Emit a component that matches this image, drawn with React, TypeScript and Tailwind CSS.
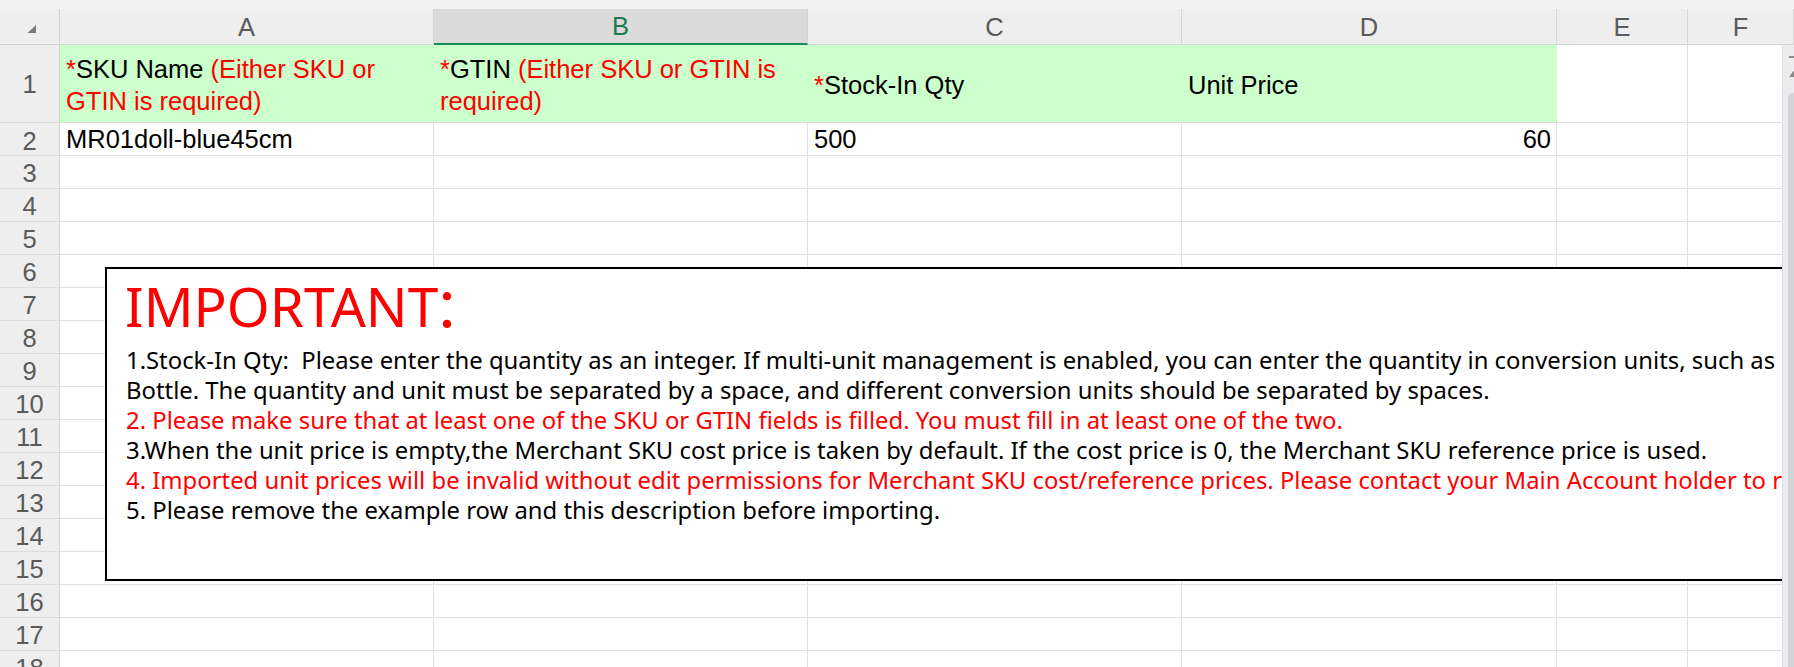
import React from 'react';

const colWidths = ['w-[374px]', 'w-[374px]', 'w-[374px]', 'w-[375px]', 'w-[131px]', 'flex-1'];
const letters = ['A', 'B', 'C', 'D', 'E', 'F'];

const Red = ({ children }: { children: React.ReactNode }) => <span className="text-[#ff0000]">{children}</span>;

function RowHead({ n, tall }: { n: number; tall?: boolean }) {
  return (
    <div
      className={`w-[60px] shrink-0 flex items-center justify-center bg-[#eeeeee] border-r border-b border-r-[#d2d2d2] border-b-[#dcdcdc] text-[25.5px] text-[#5a5a5a] ${
        tall ? 'pt-[2px]' : 'pt-[3px]'
      }`}
    >
      {n}
    </div>
  );
}

function EmptyRow({ n }: { n: number }) {
  return (
    <div className="flex h-[33px] shrink-0">
      <RowHead n={n} />
      {colWidths.map((w, i) => (
        <div key={i} className={`${w} shrink-0 border-r border-b border-[#e1e1e1]`} />
      ))}
    </div>
  );
}

export default function App() {
  const emptyRows = Array.from({ length: 16 }, (_, i) => i + 3);

  return (
    <div className="relative w-[1794px] h-[667px] overflow-hidden bg-white font-['Liberation_Sans',Arial,sans-serif] text-black">
      {/* top strip */}
      <div className="h-[9px] bg-[#f2f2f2]" />

      {/* column headers */}
      <div className="flex h-[36px]">
        <div className="w-[60px] shrink-0 relative bg-[#eeeeee] border-r border-b border-[#d2d2d2]">
          <svg className="absolute left-0 top-0" width="60" height="36" viewBox="0 0 60 36">
            <path d="M36 16 L36 24 L27.5 24 Z" fill="#7b7b7b" />
          </svg>
        </div>
        {letters.map((l, i) => (
          <div
            key={l}
            className={`${colWidths[i]} shrink-0 flex items-center justify-center text-[25.5px] pt-[1px] border-r ${
              l === 'B'
                ? 'bg-[#dadada] text-[#1c7c50] border-r-[#d2d2d2] border-b-2 border-b-[#1a8a5a]'
                : 'bg-[#eeeeee] text-[#5a5a5a] border-[#d6d6d6] border-b'
            }`}
          >
            {l}
          </div>
        ))}
      </div>

      {/* row 1 */}
      <div className="flex h-[78px]">
        <RowHead n={1} tall />
        <div className="w-[374px] shrink-0 flex items-center bg-[#ccffcc] border-b border-[#dcdcdc] pl-[6px] pt-[3px] text-[25.5px] leading-[32px]">
          <div>
            <Red>*</Red>SKU Name <Red>(Either SKU or</Red>
            <br />
            <Red>GTIN is required)</Red>
          </div>
        </div>
        <div className="w-[374px] shrink-0 flex items-center bg-[#ccffcc] border-b border-[#dcdcdc] pl-[6px] pt-[3px] text-[25.5px] leading-[32px]">
          <div>
            <Red>*</Red>GTIN <Red>(Either SKU or GTIN is</Red>
            <br />
            <Red>required)</Red>
          </div>
        </div>
        <div className="w-[374px] shrink-0 flex items-center bg-[#ccffcc] border-b border-[#dcdcdc] pl-[6px] pt-[3px] text-[25.5px] leading-[32px]">
          <div>
            <Red>*</Red>Stock-In Qty
          </div>
        </div>
        <div className="w-[375px] shrink-0 flex items-center bg-[#ccffcc] border-b border-[#dcdcdc] pl-[6px] pt-[3px] text-[25.5px] leading-[32px]">
          Unit Price
        </div>
        <div className="w-[131px] shrink-0 border-r border-b border-[#e1e1e1]" />
        <div className="flex-1 border-r border-b border-[#e1e1e1]" />
      </div>

      {/* row 2 */}
      <div className="flex h-[33px] text-[25.5px] leading-[32px]">
        <RowHead n={2} />
        <div className="w-[374px] shrink-0 border-r border-b border-[#e1e1e1] pl-[6px]">MR01doll-blue45cm</div>
        <div className="w-[374px] shrink-0 border-r border-b border-[#e1e1e1]" />
        <div className="w-[374px] shrink-0 border-r border-b border-[#e1e1e1] pl-[6px]">500</div>
        <div className="w-[375px] shrink-0 border-r border-b border-[#e1e1e1] pr-[5px] text-right">60</div>
        <div className="w-[131px] shrink-0 border-r border-b border-[#e1e1e1]" />
        <div className="flex-1 border-r border-b border-[#e1e1e1]" />
      </div>

      {emptyRows.map((n) => (
        <EmptyRow key={n} n={n} />
      ))}

      {/* text box floating over the sheet */}
      <div className="absolute left-[105px] top-[267px] w-[1760px] h-[314px] border-2 border-black bg-white overflow-hidden pl-[19px] pt-[7px] font-['Noto_Sans','Noto_Sans_CJK_SC',sans-serif] whitespace-pre">
        <div className="text-[55px] leading-[60px] text-[#ff0000] -ml-[1px]">
          IMPORTANT<span className="-ml-[5px]">：</span>
        </div>
        <div className="mt-[9px] text-[23.85px] leading-[30px]">
          <div>
            {'1.Stock-In Qty:  Please enter the quantity as an integer. If multi-unit management is enabled, you can enter the quantity in conversion units, such as'}
          </div>
          <div>
            Bottle. The quantity and unit must be separated by a space, and different conversion units should be separated by spaces.
          </div>
          <div className="text-[#ff0000]">
            2. Please make sure that at least one of the SKU or GTIN fields is filled. You must fill in at least one of the two.
          </div>
          <div>
            3.When the unit price is empty,the Merchant SKU cost price is taken by default. If the cost price is 0, the Merchant SKU reference price is used.
          </div>
          <div className="text-[#ff0000]">
            4. Imported unit prices will be invalid without edit permissions for Merchant SKU cost/reference prices. Please contact your Main Account holder to request access.
          </div>
          <div>5. Please remove the example row and this description before importing.</div>
        </div>
      </div>

      {/* vertical scrollbar */}
      <div className="absolute right-0 top-[45px] bottom-0 w-[12px] bg-[#ececef] border-l border-[#dedee2] z-10">
        <div className="absolute left-[6px] top-[11px] w-[6px] h-[2px] bg-[#8a8a8a]" />
        <svg className="absolute left-[5px] top-[24px]" width="7" height="8" viewBox="0 0 7 8">
          <path d="M7 0 L7 8 L1 8 Z" fill="#8a8a8a" />
        </svg>
        <div className="absolute left-[5px] top-[48px] bottom-0 w-[9px] rounded-t-[5px] bg-[#d2d4d8]" />
      </div>
    </div>
  );
}
